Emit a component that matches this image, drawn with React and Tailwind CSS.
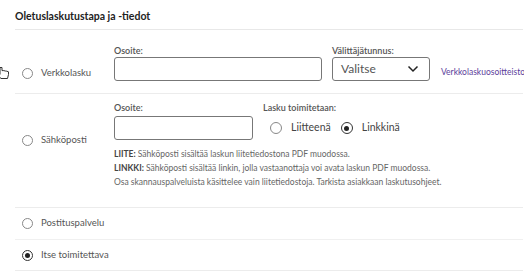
import React from "react";

const Radio = ({ checked, size = "sm" }) => {
    const box = size === "lg" ? "w-[12px] h-[12px]" : "w-[11px] h-[11px]";
    return (
        <span
            className={`${box} rounded-full border flex items-center justify-center shrink-0 bg-white ${checked ? "border-[#333]" : "border-[#888]"}`}
        >
            {checked && <span className="w-[5px] h-[5px] rounded-full bg-[#222]"></span>}
        </span>
    );
};

// hand pointer, partly pushed off the left edge like in the capture
const Cursor = () => (
    <svg className="absolute left-[-18px] top-[36px]" width="14" height="14" viewBox="0 0 14 14">
        <path
            d="M3 1.5 L3 8.5 L1.5 7.2 L0.6 8.2 L3.8 12.5 L10.5 12.5 L11.5 8.5 L11.5 5.8 L9.8 5.2 L8.3 5 L6.8 4.6 L5 4.6 L5 1.5 Z"
            fill="white"
            stroke="#333"
            strokeWidth="1"
        />
    </svg>
);

export default function App() {
    return (
        <div className="w-[524px] h-[273px] bg-white overflow-hidden" style={{ fontFamily: "Lato, 'Noto Sans', sans-serif" }}>
            <div className="ml-[15px] w-[508px]">
                <div className="pt-[9px] pb-[6px] border-b border-[#e8e8e8]">
                    <h2 className="text-[10.5px] leading-[14px] font-bold text-[#222]">Oletuslaskutustapa ja -tiedot</h2>
                </div>

                {/* Verkkolasku */}
                <div className="relative flex border-b border-[#ececec] pt-[15px] pb-[12px]">
                    <Cursor />
                    <div className="w-[99px] shrink-0 flex items-center gap-[8px] pl-[7px] pt-[22px] self-start">
                        <Radio />
                        <span className="text-[9.5px] leading-[12px] text-[#555]">Verkkolasku</span>
                    </div>
                    <div className="flex items-end shrink-0">
                        <div className="flex flex-col">
                            <label className="text-[9px] leading-[12px] font-semibold text-[#555]">Osoite:</label>
                            <input className="w-[208px] h-[24px] border border-[#777] rounded-[3px] outline-none" />
                        </div>
                        <div className="flex flex-col ml-[10px]">
                            <label className="text-[9px] leading-[12px] font-semibold text-[#555]">Välittäjätunnus:</label>
                            <div className="w-[98px] h-[24px] border border-[#777] rounded-[3px] flex items-center justify-between pl-[8px] pr-[10px]">
                                <span className="text-[12px] text-[#555]">Valitse</span>
                                <svg width="12" height="8" viewBox="0 0 12 8">
                                    <path d="M1.5 1.5 L6 6 L10.5 1.5" fill="none" stroke="#222" strokeWidth="1.5" />
                                </svg>
                            </div>
                        </div>
                        <a className="ml-[11px] mb-[3px] text-[8.5px] leading-[12px] text-[#5b3e9b] whitespace-nowrap">Verkkolaskuosoitteisto</a>
                    </div>
                </div>

                {/* Sähköposti */}
                <div className="flex border-b border-[#ececec] pt-[8px] pb-[18px]">
                    <div className="w-[99px] shrink-0 flex items-center gap-[8px] pl-[7px] pt-[32px] self-start">
                        <Radio />
                        <span className="text-[9.5px] leading-[12px] text-[#555]">Sähköposti</span>
                    </div>
                    <div className="flex flex-col">
                        <div className="flex">
                            <div className="flex flex-col">
                                <label className="text-[9px] leading-[12px] font-semibold text-[#555]">Osoite:</label>
                                <input className="w-[139px] h-[24px] mt-[2px] border border-[#777] rounded-[3px] outline-none" />
                            </div>
                            <div className="flex flex-col ml-[10px]">
                                <label className="text-[9px] leading-[12px] font-semibold text-[#555]">Lasku toimitetaan:</label>
                                <div className="h-[24px] mt-[2px] flex items-center pl-[7px]">
                                    <Radio size="lg" />
                                    <span className="ml-[9px] text-[10.5px] text-[#444]">Liitteenä</span>
                                    <span className="ml-[10px]"><Radio size="lg" checked /></span>
                                    <span className="ml-[9px] text-[10.5px] text-[#444]">Linkkinä</span>
                                </div>
                            </div>
                        </div>
                        <div className="mt-[7px] text-[8.5px] leading-[14px] text-[#666] whitespace-nowrap">
                            <p><b className="text-[#444]">LIITE:</b> Sähköposti sisältää laskun liitetiedostona PDF muodossa.</p>
                            <p><b className="text-[#444]">LINKKI:</b> Sähköposti sisältää linkin, jolla vastaanottaja voi avata laskun PDF muodossa.</p>
                            <p>Osa skannauspalveluista käsittelee vain liitetiedostoja. Tarkista asiakkaan laskutusohjeet.</p>
                        </div>
                    </div>
                </div>

                {/* Postituspalvelu */}
                <div className="h-[32px] flex items-center gap-[8px] pl-[7px] border-b border-[#f0f0f0]">
                    <Radio />
                    <span className="text-[9.5px] text-[#555]">Postituspalvelu</span>
                </div>

                {/* Itse toimitettava */}
                <div className="h-[31px] flex items-center gap-[8px] pl-[7px] border-b border-[#ececec]">
                    <Radio checked />
                    <span className="text-[9.5px] text-[#555]">Itse toimitettava</span>
                </div>
            </div>
        </div>
    );
}
